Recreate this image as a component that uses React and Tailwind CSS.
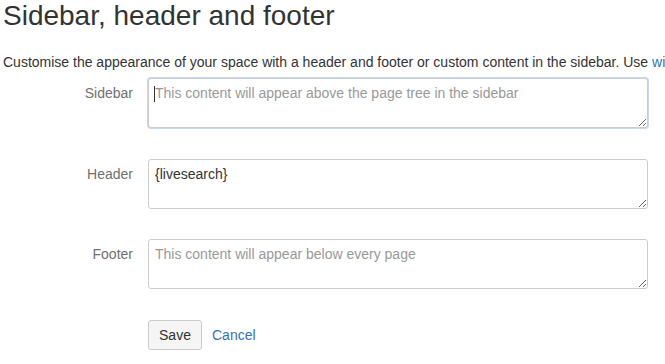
import React from "react";

function Row({ label, children, className = "" }) {
  return (
    <div className={"flex " + className}>
      <div className="w-[145px] shrink-0 pr-[15px] pt-[5px] text-right text-[14px] leading-[20px] text-[#707070]">
        {label}
      </div>
      {children}
    </div>
  );
}

export default function App() {
  const ta =
    "block w-[500px] h-[50px] shrink-0 rounded-[3px] border border-[#cccccc] bg-white px-[6px] py-[4px] text-[14px] leading-[20px] text-[#333333] placeholder:text-[#999999] outline-none";
  return (
    <div
      className="w-[665px] h-[364px] overflow-hidden bg-white pl-[3px] text-[#333333]"
      style={{ fontFamily: '"Liberation Sans", Arial, sans-serif' }}
    >
      <h1 className="text-[28px] leading-[32px] font-normal text-[#333333]">
        Sidebar, header and footer
      </h1>
      <p className="mt-[20px] whitespace-nowrap text-[14px] leading-[20px] text-[#333333]">
        Customise the appearance of your space with a header and footer or custom content in the sidebar. Use{" "}
        <a className="text-[#3572b0]">wiki markup</a> to add content.
      </p>
      <div className="mt-[6px] flex flex-col">
        <Row label="Sidebar">
          <div className="relative">
            <textarea
              className={ta + " border-[#8db2ee] shadow-[0_0_0_1px_#c6d8f7]"}
              placeholder="This content will appear above the page tree in the sidebar"
            />
            <div className="absolute left-[6px] top-[8px] h-[16px] w-[1px] bg-[#333333]" />
          </div>
        </Row>
        <Row label="Header" className="mt-[31px]">
          <textarea className={ta} defaultValue="{livesearch}" />
        </Row>
        <Row label="Footer" className="mt-[30px]">
          <textarea className={ta} placeholder="This content will appear below every page" />
        </Row>
      </div>
      <div className="mt-[31px] flex items-center pl-[145px]">
        <button className="h-[30px] w-[54px] rounded-[3px] border border-[#cccccc] bg-[#f5f5f5] text-[14px] leading-[20px] text-[#333333]">
          Save
        </button>
        <a className="ml-[10px] text-[14px] leading-[20px] text-[#3572b0]">Cancel</a>
      </div>
    </div>
  );
}
